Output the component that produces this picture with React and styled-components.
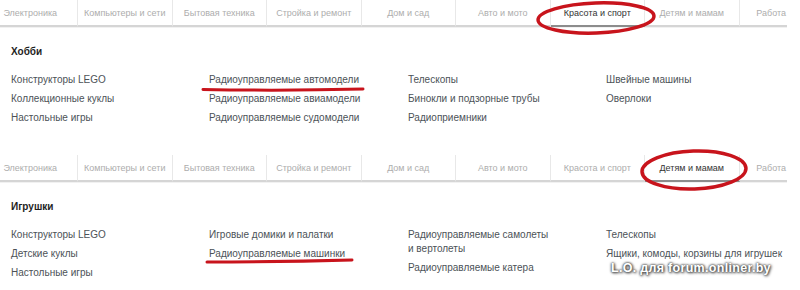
import React from "react";
import styled, { createGlobalStyle } from "styled-components";

const Global = createGlobalStyle`
  html, body { margin: 0; padding: 0; background: #fff; }
  body {
    width: 800px; height: 290px; overflow: hidden;
    font-family: "Liberation Sans", Arial, sans-serif;
  }
`;

const Page = styled.div`
  position: relative;
  width: 800px;
  height: 290px;
  overflow: hidden;
`;

const Section = styled.section`
  display: flex;
  flex-direction: column;
  height: ${(p) => (p.$last ? "auto" : "155px")};
`;

const Nav = styled.nav`
  display: flex;
  width: 803.5px;
  margin-left: -16.5px;
  height: 25px;
  border-bottom: 2px solid #d5d5d5;
  box-shadow: 0 1px 0 #f1f1f1;
`;

const Tab = styled.div`
  box-sizing: border-box;
  flex: ${(p) => (p.$last ? "1 1 auto" : "0 0 94.5px")};
  height: 27px;
  margin-bottom: -2px;
  display: flex;
  align-items: center;
  justify-content: ${(p) => (p.$last ? "flex-end" : "center")};
  padding-right: ${(p) => (p.$last ? "1px" : "0")};
  border-right: ${(p) => (p.$last ? "none" : "1px solid #e8e8e8")};
  border-bottom: 2px solid ${(p) => (p.$active ? "#8c8c8c" : "transparent")};
  font-size: 9px;
  white-space: nowrap;
  color: ${(p) => (p.$active ? "#333" : "#adadad")};
`;

const Heading = styled.h3`
  margin: 18px 0 0 11px;
  font-size: 10px;
  line-height: 14px;
  font-weight: bold;
  color: #1e1e1e;
`;

const Grid = styled.div`
  display: grid;
  grid-template-columns: 198px 199px 198px 1fr;
  margin-top: 14px;
  padding-left: 11px;
`;

const Column = styled.ul`
  list-style: none;
  margin: 0;
  padding: 0;
  display: flex;
  flex-direction: column;
  gap: 5px;
`;

const Item = styled.li`
  font-size: 10px;
  line-height: 14px;
  color: #4c5257;
  white-space: pre-line;
`;

const Annotations = styled.svg`
  position: absolute;
  left: 0;
  top: 0;
  pointer-events: none;
`;

const Watermark = styled.div`
  position: absolute;
  left: 611px;
  top: 260px;
  font-family: "Liberation Sans", Arial, sans-serif;
  font-weight: bold;
  font-size: 12.5px;
  letter-spacing: 0.3px;
  line-height: 16px;
  color: #fff;
  white-space: nowrap;
  text-shadow: 0 0 2px #3a3a3a, 0 0 3px #555, 1px 1px 3px #444;
`;

const TABS = [
  "Электроника",
  "Компьютеры и сети",
  "Бытовая техника",
  "Стройка и ремонт",
  "Дом и сад",
  "Авто и мото",
  "Красота и спорт",
  "Детям и мамам",
  "Работа",
];

const SECTIONS = [
  {
    active: "Красота и спорт",
    title: "Хобби",
    columns: [
      ["Конструкторы LEGO", "Коллекционные куклы", "Настольные игры"],
      [
        "Радиоуправляемые автомодели",
        "Радиоуправляемые авиамодели",
        "Радиоуправляемые судомодели",
      ],
      ["Телескопы", "Бинокли и подзорные трубы", "Радиоприемники"],
      ["Швейные машины", "Оверлоки"],
    ],
  },
  {
    active: "Детям и мамам",
    title: "Игрушки",
    columns: [
      ["Конструкторы LEGO", "Детские куклы", "Настольные игры"],
      ["Игровые домики и палатки", "Радиоуправляемые машинки"],
      ["Радиоуправляемые самолеты\nи вертолеты", "Радиоуправляемые катера"],
      ["Телескопы", "Ящики, комоды, корзины для игрушек"],
    ],
  },
];

export default function App() {
  return (
    <Page>
      <Global />
      {SECTIONS.map((s, si) => (
        <Section key={si} $last={si === SECTIONS.length - 1}>
          <Nav>
            {TABS.map((t, i) => (
              <Tab key={t} $active={t === s.active} $last={i === TABS.length - 1}>
                {t}
              </Tab>
            ))}
          </Nav>
          <Heading>{s.title}</Heading>
          <Grid>
            {s.columns.map((col, ci) => (
              <Column key={ci}>
                {col.map((it) => (
                  <Item key={it}>{it}</Item>
                ))}
              </Column>
            ))}
          </Grid>
        </Section>
      ))}
      <Annotations width="800" height="290" viewBox="0 0 800 290">
        <g fill="none" stroke="#c8141c" strokeLinecap="round">
          <ellipse cx="596" cy="18" rx="58" ry="15" strokeWidth="3.5" transform="rotate(-2 596 18)" />
          <ellipse cx="694" cy="170" rx="52" ry="19" strokeWidth="3.5" transform="rotate(-2 694 170)" />
          <path d="M203 89.5 Q283 91 363 89" strokeWidth="3" />
          <path d="M207 262 Q280 262 352 260" strokeWidth="3" />
        </g>
      </Annotations>
      <Watermark>L.O. для forum.onliner.by</Watermark>
    </Page>
  );
}
